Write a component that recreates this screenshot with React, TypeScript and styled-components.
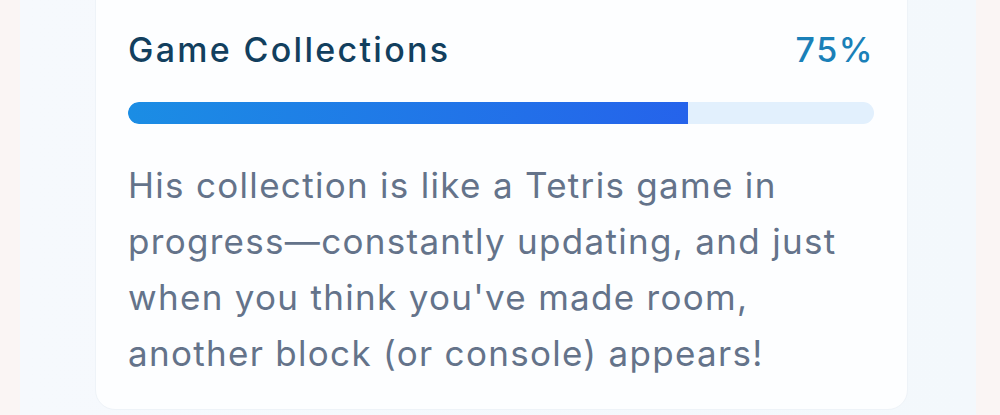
import styled, { createGlobalStyle } from "styled-components";

const GlobalStyle = createGlobalStyle`
  html, body {
    margin: 0;
    padding: 0;
    height: 100%;
    overflow: hidden;
    background: #faf5f4;
  }
  body {
    font-family: Inter, "Noto Sans", sans-serif;
  }
`;

const Page = styled.div`
  height: 415px;
  overflow: hidden;
  padding: 0 24px 0 20px;
  background: #faf5f4;
  display: flex;
`;

const Panel = styled.div`
  flex: 1;
  height: 440px;
  background: linear-gradient(90deg, #f6f9fd 0%, #f3f8fc 100%);
  padding: 0 68px 0 75px;
`;

const Card = styled.div`
  margin-top: -30px;
  height: 440px;
  box-sizing: border-box;
  background: #fdfeff;
  border: 1px solid #eef3f8;
  border-radius: 20px;
  padding: 56px 33px 0 32px;
`;

const Header = styled.div`
  display: flex;
  justify-content: space-between;
  align-items: center;
  height: 44px;
`;

const Title = styled.h2`
  margin: 0;
  font-size: 34px;
  font-weight: 500;
  color: #123f5e;
  letter-spacing: 2.3px;
`;

const Percent = styled.span`
  font-size: 34px;
  font-weight: 500;
  color: #1a80b8;
  letter-spacing: 1.5px;
`;

const Track = styled.div`
  margin-top: 31px;
  height: 22px;
  border-radius: 11px;
  background: #e2f0fd;
  overflow: hidden;
`;

const Fill = styled.div`
  height: 100%;
  background: linear-gradient(90deg, #1b8de4 0%, #2563eb 100%);
  border-radius: 11px 0 0 11px;
`;

const Text = styled.p`
  margin: 33px 0 0;
  font-size: 35px;
  line-height: 56px;
  letter-spacing: 1.3px;
  color: #64738a;
`;

export default function App() {
  const progress = 75;
  return (
    <>
      <GlobalStyle />
      <Page>
        <Panel>
          <Card>
            <Header>
              <Title>Game Collections</Title>
              <Percent>{progress}%</Percent>
            </Header>
            <Track>
              <Fill style={{ width: `${progress}%` }} />
            </Track>
            <Text>
              His collection is like a Tetris game in progress—constantly
              updating, and just when you think you've made room, another block
              (or console) appears!
            </Text>
          </Card>
        </Panel>
      </Page>
    </>
  );
}
